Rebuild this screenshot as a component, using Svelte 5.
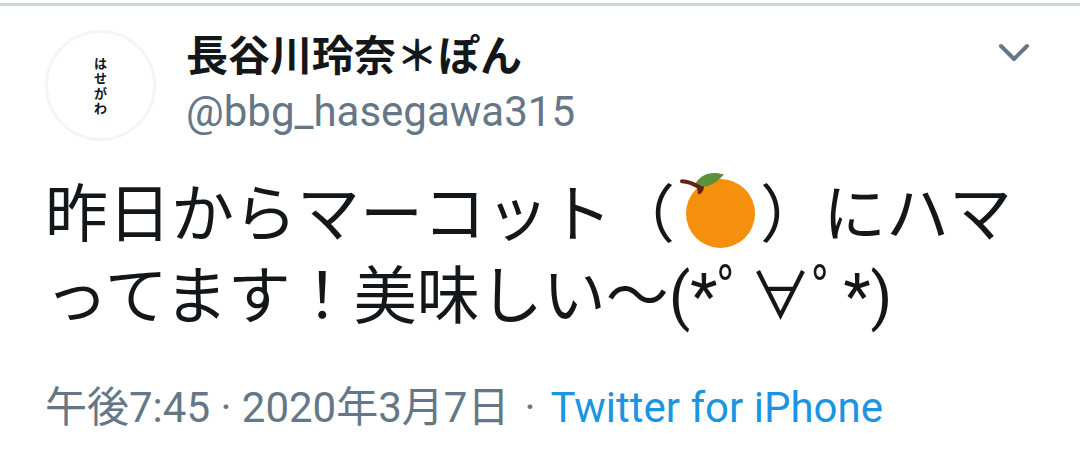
<script>
  const avatarText = ['は', 'せ', 'が', 'わ'];
</script>

<article class="tweet">
  <header>
    <a class="avatar" href="#profile" aria-label="長谷川玲奈">
      {#each avatarText as c}<span>{c}</span>{/each}
    </a>
    <div class="names">
      <a class="name" href="#profile">長谷川玲奈＊ぽん</a>
      <a class="handle" href="#profile">@bbg_hasegawa315</a>
    </div>
    <button class="more" aria-label="メニュー">
      <svg viewBox="0 0 32 20" width="32" height="20"><path d="M3 4 L16 17 L29 4" /></svg>
    </button>
  </header>
  <p class="body">昨日からマーコット（<svg class="emoji" viewBox="0 0 76 76" role="img" aria-label="みかん"><circle cx="40.500" cy="40.500" r="34.500" fill="#f4900c" /><path d="M13.500 13.800C18 4 26 0 34 0C38 0 41 .7 44 1.500C35 11 29 15 13.500 13.800Z" fill="#5c913b" /><path d="M2 8.300C8 8.500 13 10.500 20 14.500" fill="none" stroke="#662113" stroke-width="4" stroke-linecap="round" /><path d="M17 15.500C19 14.500 21 12.500 23 13C25.500 14.500 22 21.500 18.500 21.300C17 20.500 18.500 18 17 15.500Z" fill="#662113" /></svg>）にハマってます！美味しい〜(<span>*</span>ﾟ∀ﾟ<span>*</span>)</p>
  <footer><time datetime="2020-03-07T19:45">午後7:45 · 2020年3月7日</time><span class="dot">·</span><a href="#source">Twitter for iPhone</a></footer>
</article>

<style>
  :global(body) { margin: 0; background: #fff; }
  .tweet {
    border-top: 3px solid #ccd6dd;
    margin-top: 3px;
    padding: 24px 50px 24px 45px;
    font-family: Roboto, "Noto Sans CJK JP", sans-serif;
    color: #14171a;
  }
  a { text-decoration: none; color: inherit; }
  header { display: flex; align-items: flex-start; }
  .avatar {
    box-sizing: border-box;
    width: 111px;
    height: 111px;
    border: 3px solid #f5f5f5;
    border-radius: 50%;
    display: flex;
    flex-direction: column;
    align-items: center;
    justify-content: center;
    font-size: 13px;
    line-height: 15px;
    font-weight: 700;
  }
  .names { flex: 1; display: flex; flex-direction: column; margin-left: 30px; }
  .name { font-size: 42px; line-height: 54px; font-weight: 700; }
  .handle { font-size: 42px; line-height: 56px; color: #657786; }
  .more { border: 0; background: none; padding: 12px 0; display: flex; }
  .more path { fill: none; stroke: #657786; stroke-width: 4; stroke-linecap: round; stroke-linejoin: round; }
  .body { margin: 32px 0 0; font-size: 63px; line-height: 82px; }
  .body span { display: inline-block; }
  .emoji { width: 76px; height: 76px; margin: 0 4px 0 5px; vertical-align: -13px; }
  footer { margin-top: 42px; font-size: 42px; line-height: 56px; color: #657786; }
  .dot { margin: 0 15px; }
  footer a { color: #1b95e0; }
</style>
